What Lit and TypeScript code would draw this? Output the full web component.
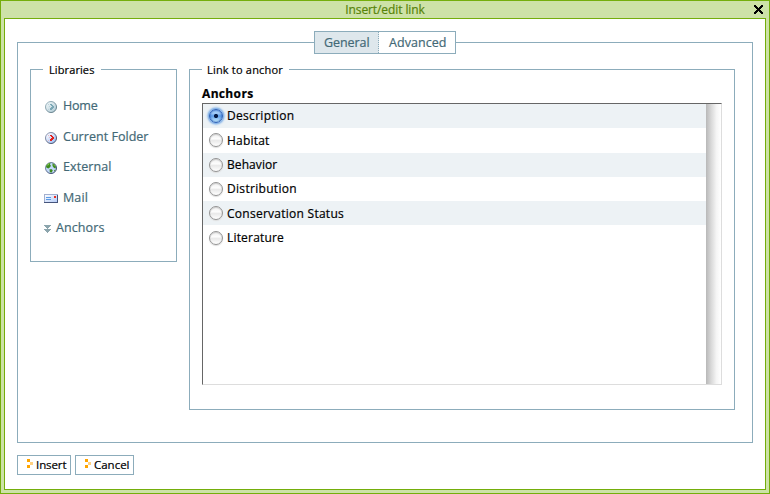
import { LitElement, html, css, svg, TemplateResult } from "lit";
import { customElement, property, state } from "lit/decorators.js";
import { classMap } from "lit/directives/class-map.js";

/** A one-line label whose tracking is adjusted so that it fills a given width. */
@customElement("fit-label")
class FitLabel extends LitElement {
  @property({ type: Number }) width = 0;
  @property() text = "";

  static styles = css`
    :host { display: inline-block; white-space: nowrap; }
    span { display: inline-block; -webkit-text-stroke: 0.2px currentColor; }
  `;

  updated() {
    const el = this.renderRoot.querySelector("span") as HTMLElement;
    el.style.letterSpacing = "0";
    const natural = el.getBoundingClientRect().width;
    el.style.letterSpacing = (this.width - natural) / this.text.length + "px";
  }

  render() {
    return html`<span>${this.text}</span>`;
  }
}

type IconName = "home" | "folder" | "external" | "mail" | "anchor";

const ball = (id: string, light: string, dark: string, rim: string, rimDark: string, arrow: string, dots: string) => svg`
  <defs>
    <linearGradient id=${id} x1="0" y1="0" x2="1" y2="1">
      <stop offset="0.2" stop-color=${light} /><stop offset="1" stop-color=${dark} />
    </linearGradient>
    <linearGradient id=${id + "r"} x1="0" y1="0" x2="1" y2="1">
      <stop offset="0" stop-color=${rim} /><stop offset="1" stop-color=${rimDark} />
    </linearGradient>
  </defs>
  <circle cx="6" cy="6" r="5.5" fill=${`url(#${id})`} stroke=${`url(#${id}r)`} />
  <g shape-rendering="crispEdges">
    <path d="M5 3h2v1h1v1h1v2h-1v1h-1v1h-2v-2h1v-1h1v-1h-1v-1h-1z" fill=${arrow} />
    <path d="M4 5h1v1h-1zM3 3h1v1h-1zM3 8h1v1h-1z" fill=${dots} />
  </g>`;

const icons: Record<IconName, TemplateResult> = {
  home: html`<svg width="12" height="12" viewBox="0 0 12 12">${ball("h", "#e8f1f4", "#a9c6d1", "#a4bcc6", "#56727f", "#7ba7b5", "#bdd3dc")}</svg>`,
  folder: html`<svg width="12" height="12" viewBox="0 0 12 12">${ball("f", "#f4f7ff", "#8db2f2", "#9aa5c0", "#39415c", "#e3201b", "#e9b9c4")}</svg>`,
  external: html`<svg width="12" height="12" viewBox="0 0 12 12">
    <defs><linearGradient id="e" x1="0" y1="0" x2="1" y2="1">
      <stop offset="0" stop-color="#8da0b8" /><stop offset="1" stop-color="#27375c" />
    </linearGradient></defs>
    <circle cx="6" cy="6" r="5.500" fill="#c2d9fb" stroke="url(#e)" />
    <path d="M1 5l.5-2 2-1.800 2-.4-.5 2 1 1-1 1.500-1.500 1.200-1.500-.5zM7.500 1.200l2 1 1.500 2.500-.5 1.800-1.500-.5-1.500-2zM4.500 7.200l2.500 0 .8 1.500-1.500 2-1.500-.7zM9 8l1.500-.3-1.200 1.800z" fill="#3f8b1e" />
    <path d="M1.800 3.200l2-1.900 1 .1-1.800 2.200zM8.300 2.200l1.500 1-.6 1z" fill="#8fcc5a" />
  </svg>`,
  mail: html`<svg width="14" height="9" viewBox="0 0 14 9">
    <defs><linearGradient id="m" x1="0" y1="0" x2="1" y2="1">
      <stop offset="0" stop-color="#ffffff" /><stop offset="1" stop-color="#b3cbf8" />
    </linearGradient></defs>
    <rect x=".5" y=".5" width="13" height="8" fill="url(#m)" stroke="#a3b0cf" />
    <path d="M0 8.500h14M13.500 1v8" stroke="#46557c" />
    <path d="M2 3.500h5M2 5.500h5" stroke="#5b9be6" />
    <path d="M10 2h2v2h-2z" fill="#ea2f22" />
  </svg>`,
  anchor: html`<svg width="7" height="8" viewBox="0 0 7 8" shape-rendering="crispEdges">
    <path d="M0 0h7v1h-1v1h-1v1h-1v1h3v1h-1v1h-1v1h-1v1h-1v-1h-1v-1h-1v-1h-1v-1h3v-1h-1v-1h-1v-1h-1z" fill="#8ca5ad" />
  </svg>`,
};

@customElement("app-root")
class AppRoot extends LitElement {
  @state() private selected = 0;

  private libraries: { icon: IconName; text: string; width: number }[] = [
    { icon: "home", text: "Home", width: 34.5 },
    { icon: "folder", text: "Current Folder", width: 85.5 },
    { icon: "external", text: "External", width: 48.5 },
    { icon: "mail", text: "Mail", width: 25 },
    { icon: "anchor", text: "Anchors", width: 48.5 },
  ];

  private anchors = [
    { text: "Description", width: 67.5 },
    { text: "Habitat", width: 42.5 },
    { text: "Behavior", width: 50.3 },
    { text: "Distribution", width: 70 },
    { text: "Conservation Status", width: 117 },
    { text: "Literature", width: 57 },
  ];

  static styles = css`
    :host {
      display: block; box-sizing: border-box; width: 770px; height: 494px;
      font-family: "Open Sans", "Noto Sans", sans-serif; font-size: 12px; color: #000;
    }
    * { box-sizing: border-box; }
    svg { display: block; flex: none; }
    .window {
      height: 494px; border: 1px solid #74ae0b; background: #cde2a7;
      padding: 0 3px 3px; display: flex; flex-direction: column;
    }
    .title {
      flex: none; height: 17px; line-height: 17px; position: relative;
      text-align: center; color: #578308;
    }
    .close { position: absolute; right: 3px; top: 4px; }
    .body {
      flex: 1; background: #fff; border: 1px solid #74ae0b;
      padding: 23px 12px 0; display: flex; flex-direction: column;
    }
    .panel { flex: none; width: 736px; height: 401px; border: 1px solid #8cacbb; position: relative; }
    .tabs {
      position: absolute; left: 296px; top: -12px; width: 142px; height: 23px;
      border: 1px solid #8cacbb; background: #fff; display: flex;
      color: #436976; font-size: 12.500px; line-height: 21px;
    }
    .tab { padding-left: 10px; }
    .tab.on { flex: none; width: 64px; padding-left: 9px; background: #dee7ec; border-right: 1px dotted #8cacbb; }
    .columns { display: flex; gap: 12px; padding: 26px 0 0 12px; align-items: flex-start; }
    .group { border: 1px solid #8cacbb; position: relative; }
    .libs { width: 147px; height: 193px; padding-top: 21px; }
    .link { width: 546px; height: 341px; padding: 15px 12px 0; }
    .legend {
      position: absolute; left: 12px; top: -9px; height: 17px; line-height: 17px;
      padding: 0 6px; background: #fff; font-size: 11px;
    }
    .link .legend { padding-left: 5px; }
    .lib {
      display: flex; align-items: center; height: 30.500px; padding-left: 14px; gap: 6px;
      color: #436976; font-size: 12.500px; line-height: 18px;
    }
    .lib svg { position: relative; top: 1px; }
    .lib.mail { padding-left: 13px; gap: 5px; }
    .lib.anchor { padding-left: 13px; gap: 5px; }
    .heading { height: 18px; line-height: 18px; font-weight: 700; }
    .box {
      width: 520px; height: 282px; border: 1px solid #ddd; border-top-color: #666; border-left-color: #666;
      display: flex;
    }
    .rows { flex: 1; }
    .row { height: 24.300px; display: flex; align-items: center; padding-left: 6px; gap: 4px; line-height: 24px; }
    .row:nth-child(odd) { background: #edf2f5; }
    .row fit-label { position: relative; top: .2px; }
    .radio {
      flex: none; width: 14px; height: 14px; border-radius: 50%;
      border: 1px solid #949494;
      background: linear-gradient(#f0f0f0 0, #fdfdfd 40%, #e9e9e9 55%, #fff 100%);
      box-shadow: inset 0 1px 1px #ccc, 0 1px 1px #ddd;
    }
    .radio.on {
      border-color: #2c61b8;
      background: radial-gradient(circle at 50% 50%, #071b43 0 1.600px, transparent 2.500px),
        linear-gradient(#8fbdf0 0, #a8d0f8 25%, #5c9ce8 50%, #d3f6ff 100%);
      box-shadow: inset 0 0 2px #2458b8, 0 0 2px 1.500px #74a9e6;
    }
    .scroll { width: 15px; background: linear-gradient(90deg, #b8b8b8, #d9d9d9 35%, #f5f5f5 70%, #fff); }
    .buttons { display: flex; gap: 4px; margin-top: 12px; }
    .button {
      height: 20px; border: 1px solid #8cacbb; display: flex; padding-left: 9px; gap: 3px;
      font-size: 11.500px; line-height: 18px;
    }
    .button svg { margin-top: 3px; }
    .insert { width: 54px; }
    .cancel { width: 59px; }
  `;

  private button(kind: string, text: string, width: number) {
    return html`<div class="button ${kind}">
      <svg width="6" height="9" viewBox="0 0 6 9" shape-rendering="crispEdges">
        <path d="M0 0h3v3h-3zM0 6h3v3h-3z" fill="#ffa500" /><path d="M3 3h3v3h-3z" fill="#ffd080" />
      </svg>
      <fit-label text=${text} width=${width}></fit-label>
    </div>`;
  }

  render() {
    return html`<div class="window">
      <div class="title">
        <fit-label text="Insert/edit link" width="79.5"></fit-label>
        <svg class="close" width="9" height="9" viewBox="0 0 9 9" shape-rendering="crispEdges">
          <path d="M0 0h2v1h1v1h1v1h1v-1h1v-1h1v-1h2v2h-1v1h-1v1h-1v1h1v1h1v1h1v2h-2v-1h-1v-1h-1v-1h-1v1h-1v1h-1v1h-2v-2h1v-1h1v-1h1v-1h-1v-1h-1v-1h-1z" />
        </svg>
      </div>
      <div class="body">
        <div class="panel">
          <div class="tabs">
            <div class="tab on"><fit-label text="General" width="45.5"></fit-label></div>
            <div class="tab"><fit-label text="Advanced" width="57.5"></fit-label></div>
          </div>
          <div class="columns">
            <div class="group libs">
              <div class="legend"><fit-label text="Libraries" width="45.5"></fit-label></div>
              ${this.libraries.map((l) => html`<div class="lib ${l.icon}">
                ${icons[l.icon]}<fit-label text=${l.text} width=${l.width}></fit-label>
              </div>`)}
            </div>
            <div class="group link">
              <div class="legend"><fit-label text="Link to anchor" width="76"></fit-label></div>
              <div class="heading"><fit-label text="Anchors" width="51.5"></fit-label></div>
              <div class="box">
                <div class="rows">
                  ${this.anchors.map((a, i) => html`<div class="row" @click=${() => (this.selected = i)}>
                    <span class=${classMap({ radio: true, on: i === this.selected })}></span>
                    <fit-label text=${a.text} width=${a.width}></fit-label>
                  </div>`)}
                </div>
                <div class="scroll"></div>
              </div>
            </div>
          </div>
        </div>
        <div class="buttons">${this.button("insert", "Insert", 30.5)}${this.button("cancel", "Cancel", 35.5)}</div>
      </div>
    </div>`;
  }
}
